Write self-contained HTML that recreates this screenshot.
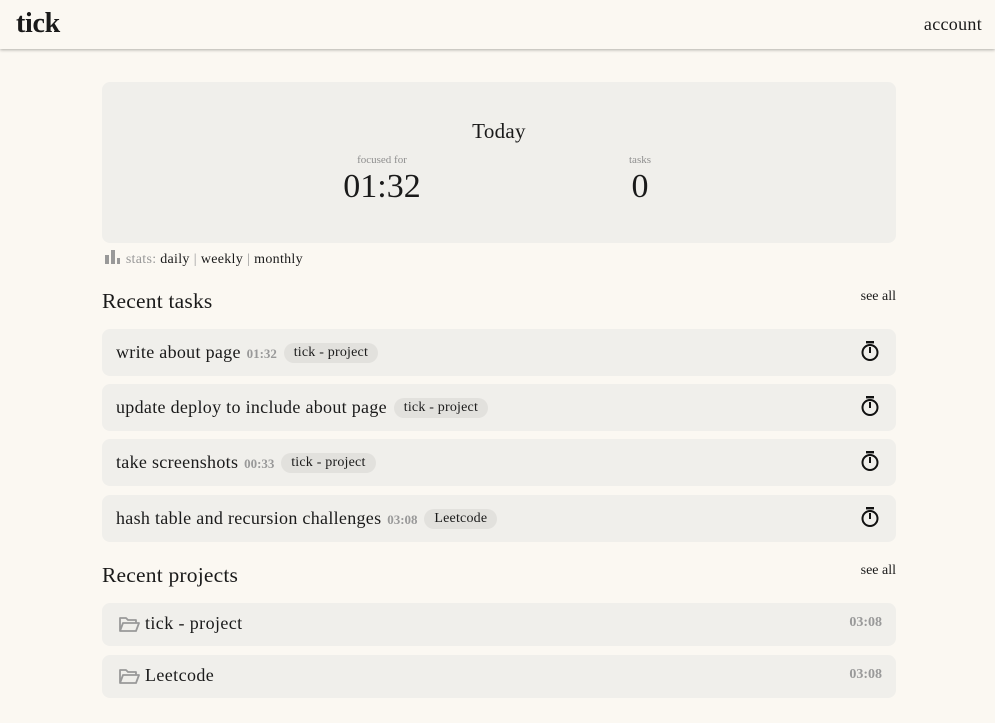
<!DOCTYPE html>
<html><head><meta charset="utf-8"><style>
*{box-sizing:border-box;margin:0;padding:0}
body{width:995px;height:723px;overflow:hidden;background:#fbf8f2;font-family:"Liberation Serif",serif;color:#1a1a1a}
.hdr{height:49px;background:#fbf8f2;box-shadow:0 1px 3px rgba(0,0,0,.3);position:relative}
.logo{position:absolute;left:16px;top:8px;font-size:28px;font-weight:bold;letter-spacing:-0.3px}
.acct{position:absolute;right:13px;top:14px;font-size:18px;letter-spacing:0.3px}
.card{position:absolute;left:102px;width:794px;background:#f0efeb;border-radius:8px}
.today{top:82px;height:161px}
.today .t{position:absolute;top:37px;width:100%;text-align:center;font-size:21px;letter-spacing:0.3px}
.lbl{position:absolute;top:72px;font-size:11px;color:#8f8f8f;text-align:center;width:120px}
.big{position:absolute;top:86px;font-size:34px;text-align:center;width:160px}
.stats{position:absolute;left:104px;top:249px;font-size:14px;letter-spacing:0.3px}
.stats .g{color:#999}
.sep{color:#999;margin:0 4px}
.h2{position:absolute;left:102px;font-size:21.5px;letter-spacing:0.2px}
.see{position:absolute;right:99px;font-size:14px}
.task{height:47px}
.task .n{position:absolute;left:14px;top:13px;font-size:18px;letter-spacing:0.3px;white-space:nowrap}
.tm{color:#999;font-size:13px;font-weight:bold;margin-left:1px;letter-spacing:0}
.tag{display:inline-block;background:#e2e1dd;border-radius:10px;font-size:14px;padding:2px 10px;margin-left:2px;vertical-align:2px;letter-spacing:0.2px}
.sw{position:absolute;right:16px;top:11px}
.proj{height:43px}
.proj .n{position:absolute;left:43px;top:10px;font-size:18px;letter-spacing:0.4px}
.proj svg{position:absolute;left:16px;top:12px}
.proj .d{position:absolute;right:14px;top:12px;font-size:14px;font-weight:bold;color:#999}
</style></head><body>
<div class="hdr"><div class="logo">tick</div><div class="acct">account</div></div>
<div class="card today"><div class="t">Today</div>
<div class="lbl" style="left:220px">focused for</div><div class="big" style="left:200px">01:32</div>
<div class="lbl" style="left:478px">tasks</div><div class="big" style="left:458px">0</div></div>
<div class="stats"><svg width="18" height="15" style="vertical-align:-1px"><rect x="1" y="6" width="4" height="9" fill="#999"/><rect x="7" y="1" width="4" height="14" fill="#999"/><rect x="13" y="9" width="3" height="6" fill="#999"/></svg> <span class="g">stats:</span> daily<span class="sep">|</span>weekly<span class="sep">|</span>monthly</div>
<div class="h2" style="top:289px">Recent tasks</div><div class="see" style="top:289px">see all</div>
<div class="card task" style="top:329px"><div class="n">write about page <span class="tm">01:32</span> <span class="tag">tick - project</span></div><svg class="sw" width="20" height="22" viewBox="0 0 20 22"><rect x="6" y="1" width="8" height="2.4" fill="#111"/><circle cx="10" cy="12.5" r="7.5" fill="none" stroke="#111" stroke-width="2"/><rect x="9" y="7" width="2" height="6" fill="#111"/></svg></div>
<div class="card task" style="top:384px"><div class="n">update deploy to include about page <span class="tag">tick - project</span></div><svg class="sw" width="20" height="22" viewBox="0 0 20 22"><rect x="6" y="1" width="8" height="2.4" fill="#111"/><circle cx="10" cy="12.5" r="7.5" fill="none" stroke="#111" stroke-width="2"/><rect x="9" y="7" width="2" height="6" fill="#111"/></svg></div>
<div class="card task" style="top:439px"><div class="n">take screenshots <span class="tm">00:33</span> <span class="tag">tick - project</span></div><svg class="sw" width="20" height="22" viewBox="0 0 20 22"><rect x="6" y="1" width="8" height="2.4" fill="#111"/><circle cx="10" cy="12.5" r="7.5" fill="none" stroke="#111" stroke-width="2"/><rect x="9" y="7" width="2" height="6" fill="#111"/></svg></div>
<div class="card task" style="top:495px"><div class="n">hash table and recursion challenges <span class="tm">03:08</span> <span class="tag">Leetcode</span></div><svg class="sw" width="20" height="22" viewBox="0 0 20 22"><rect x="6" y="1" width="8" height="2.4" fill="#111"/><circle cx="10" cy="12.5" r="7.5" fill="none" stroke="#111" stroke-width="2"/><rect x="9" y="7" width="2" height="6" fill="#111"/></svg></div>
<div class="h2" style="top:563px">Recent projects</div><div class="see" style="top:563px">see all</div>
<div class="card proj" style="top:603px"><svg width="22" height="18" viewBox="0 0 22 18"><path d="M2 16V3h6l2 2h8v3M2 16l3-8h16l-3 8z" fill="none" stroke="#999" stroke-width="1.8" stroke-linejoin="round"/></svg><div class="n">tick - project</div><div class="d">03:08</div></div>
<div class="card proj" style="top:655px"><svg width="22" height="18" viewBox="0 0 22 18"><path d="M2 16V3h6l2 2h8v3M2 16l3-8h16l-3 8z" fill="none" stroke="#999" stroke-width="1.8" stroke-linejoin="round"/></svg><div class="n">Leetcode</div><div class="d">03:08</div></div>
</body></html>
